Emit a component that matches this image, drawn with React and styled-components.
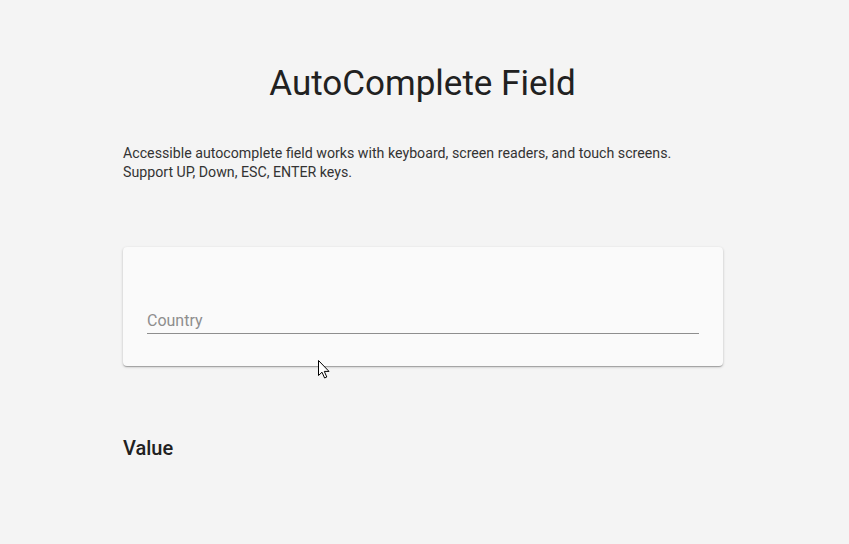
import styled, { createGlobalStyle } from 'styled-components';

const Global = createGlobalStyle`
  html, body {
    margin: 0;
    background: #f4f4f4;
    font-family: Roboto, "Liberation Sans", sans-serif;
    color: #212121;
  }
`;

const Page = styled.div`
  position: relative;
  width: 849px;
  height: 544px;
  overflow: hidden;
  display: flex;
  flex-direction: column;
  align-items: center;
`;

const Title = styled.h1`
  margin: 61px 4px 0 0;
  font-size: 35px;
  font-weight: 400;
  line-height: 46px;
  color: #212121;
`;

const Column = styled.div`
  align-self: flex-start;
  margin-left: 123px;
  width: 600px;
  display: flex;
  flex-direction: column;
`;

const Intro = styled.p`
  margin: 37px 0 0;
  font-size: 14.2px;
  line-height: 19px;
  color: #333;
`;

const Card = styled.div`
  margin-top: 65px;
  height: 119px;
  box-sizing: border-box;
  padding: 0 24px 32px;
  background: #fafafa;
  border-radius: 4px;
  box-shadow: 0 1px 3px rgba(0, 0, 0, 0.2), 0 1px 1px rgba(0, 0, 0, 0.14), 0 2px 1px -1px rgba(0, 0, 0, 0.12);
  display: flex;
  flex-direction: column;
  justify-content: flex-end;
`;

const Field = styled.label`
  display: block;
  border-bottom: 1px solid #8e8e8e;
  padding-bottom: 2px;
  font-size: 16px;
  line-height: 20px;
  color: #8e8e8e;
`;

const Heading = styled.h2`
  margin: 70px 0 0;
  font-size: 20px;
  font-weight: 500;
  line-height: 24px;
  color: #212121;
`;

const Pointer = styled.svg`
  position: absolute;
  left: 318px;
  top: 360px;
`;

export default function App() {
  return (
    <Page>
      <Global />
      <Title>AutoComplete Field</Title>
      <Column>
        <Intro>
          Accessible autocomplete field works with keyboard, screen readers, and touch screens.
          <br />
          Support UP, Down, ESC, ENTER keys.
        </Intro>
        <Card>
          <Field>Country</Field>
        </Card>
        <Heading>Value</Heading>
      </Column>
      <Pointer width="13" height="19" viewBox="0 0 13 19">
        <path d="M0.5 0.5 L0.5 15.5 L4 12.2 L6.6 18 L8.8 17 L6.3 11.4 L11 11.4 Z" fill="#fff" stroke="#000" strokeWidth="1" strokeLinejoin="miter" />
      </Pointer>
    </Page>
  );
}
